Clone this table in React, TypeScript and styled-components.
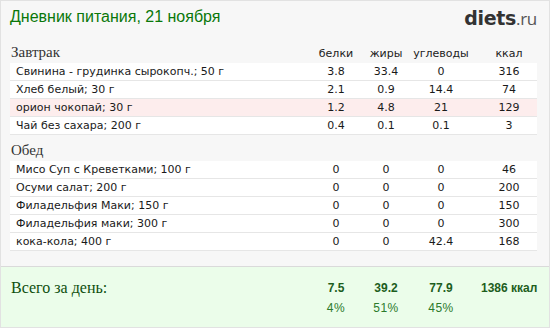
import styled, { createGlobalStyle } from "styled-components";

const GlobalStyle = createGlobalStyle`
  body {
    margin: 0;
    background: #ffffff;
  }
`;

const Page = styled.div`
  width: 550px;
  height: 328px;
  box-sizing: border-box;
  border: 1px solid #e2e2e2;
  background: #f7f7f7;
  display: flex;
  flex-direction: column;
  font-family: "DejaVu Sans", Verdana, sans-serif;
  color: #222;
`;

const Header = styled.div`
  display: flex;
  align-items: center;
  justify-content: space-between;
  height: 32px;
  padding: 0 12px 0 9px;
`;

const Title = styled.h1`
  margin: 0;
  font-family: "Liberation Sans", Arial, sans-serif;
  font-weight: normal;
  font-size: 16px;
  color: #0a780a;
`;

const Logo = styled.div`
  font-size: 19px;
  color: #333;
  letter-spacing: -0.3px;
  margin-top: 2px;
`;

const LogoStrong = styled.span`
  font-family: "DejaVu Sans", sans-serif;
  font-weight: bold;
`;

const LogoLight = styled.span`
  font-family: "Open Sans", sans-serif;
  font-size: 17px;
  color: #555;
`;

const Section = styled.div`
  padding: 0 12px 0 9px;
`;

const Cols = styled.div`
  display: grid;
  grid-template-columns: 1fr 50px 50px 60px 66px;
  align-items: center;
`;

const SectionHead = styled(Cols)<{ $first?: boolean }>`
  height: ${(p) => (p.$first ? 30 : 26)}px;
  align-items: end;
  padding-bottom: 2px;
  box-sizing: border-box;
`;

const SectionTitle = styled.div`
  font-family: "Liberation Serif", "Times New Roman", serif;
  font-size: 15px;
  color: #333;
  padding-left: 1px;
`;

const ColHead = styled.div<{ $last?: boolean }>`
  font-size: 11px;
  text-align: center;
  padding-left: ${(p) => (p.$last ? 10 : 0)}px;
  padding-bottom: 1px;
`;

const Row = styled(Cols)<{ $hl?: boolean }>`
  height: 17px;
  background: ${(p) => (p.$hl ? "#fdeded" : "#ffffff")};
  border-bottom: 1px solid #e6e6e6;
  font-size: 11px;
  color: #1a1a1a;
`;

const Name = styled.div`
  padding-left: 6px;
  white-space: nowrap;
`;

const Num = styled.div<{ $last?: boolean }>`
  text-align: center;
  padding-left: ${(p) => (p.$last ? 10 : 0)}px;
`;

const Totals = styled.div`
  margin-top: auto;
  height: 61px;
  border-top: 1px solid #dadada;
  background: #ebfdea;
  padding: 10px 12px 0 9px;
  box-sizing: border-box;
`;

const TotalsGrid = styled.div`
  display: grid;
  grid-template-columns: 1fr 50px 50px 60px 66px;
  grid-template-rows: 22px 18px;
  align-items: center;
`;

const TotalLabel = styled.div`
  font-family: "Liberation Serif", "Times New Roman", serif;
  font-size: 16px;
  color: #0e4f0e;
  padding-left: 1px;
`;

const TotalValue = styled.div<{ $last?: boolean }>`
  font-family: "Liberation Sans", Arial, sans-serif;
  font-weight: bold;
  font-size: 12px;
  color: #1d5e1d;
  text-align: center;
  white-space: nowrap;
  padding-left: ${(p) => (p.$last ? 10 : 0)}px;
`;

const Percent = styled.div`
  font-family: "Liberation Sans", Arial, sans-serif;
  font-size: 12px;
  color: #2c7a2c;
  text-align: center;
  letter-spacing: 0.5px;
`;

type Item = { name: string; p: string; f: string; c: string; k: string; hl?: boolean };

const breakfast: Item[] = [
  { name: "Свинина - грудинка сырокопч.; 50 г", p: "3.8", f: "33.4", c: "0", k: "316" },
  { name: "Хлеб белый; 30 г", p: "2.1", f: "0.9", c: "14.4", k: "74" },
  { name: "орион чокопай; 30 г", p: "1.2", f: "4.8", c: "21", k: "129", hl: true },
  { name: "Чай без сахара; 200 г", p: "0.4", f: "0.1", c: "0.1", k: "3" },
];

const lunch: Item[] = [
  { name: "Мисо Суп с Креветками; 100 г", p: "0", f: "0", c: "0", k: "46" },
  { name: "Осуми салат; 200 г", p: "0", f: "0", c: "0", k: "200" },
  { name: "Филадельфия Маки; 150 г", p: "0", f: "0", c: "0", k: "150" },
  { name: "Филадельфия маки; 300 г", p: "0", f: "0", c: "0", k: "300" },
  { name: "кока-кола; 400 г", p: "0", f: "0", c: "42.4", k: "168" },
];

function Meal({ title, items, first }: { title: string; items: Item[]; first?: boolean }) {
  return (
    <Section>
      <SectionHead $first={first}>
        <SectionTitle>{title}</SectionTitle>
        {first && (
          <>
            <ColHead>белки</ColHead>
            <ColHead>жиры</ColHead>
            <ColHead>углеводы</ColHead>
            <ColHead $last>ккал</ColHead>
          </>
        )}
      </SectionHead>
      {items.map((it, i) => (
        <Row key={i} $hl={it.hl}>
          <Name>{it.name}</Name>
          <Num>{it.p}</Num>
          <Num>{it.f}</Num>
          <Num>{it.c}</Num>
          <Num $last>{it.k}</Num>
        </Row>
      ))}
    </Section>
  );
}

export default function App() {
  return (
    <>
      <GlobalStyle />
      <Page>
        <Header>
          <Title>Дневник питания, 21 ноября</Title>
          <Logo>
            <LogoStrong>diets</LogoStrong>
            <LogoLight>.ru</LogoLight>
          </Logo>
        </Header>
        <Meal title="Завтрак" items={breakfast} first />
        <Meal title="Обед" items={lunch} />
        <Totals>
          <TotalsGrid>
            <TotalLabel>Всего за день:</TotalLabel>
            <TotalValue>7.5</TotalValue>
            <TotalValue>39.2</TotalValue>
            <TotalValue>77.9</TotalValue>
            <TotalValue $last>1386 ккал</TotalValue>
            <div />
            <Percent>4%</Percent>
            <Percent>51%</Percent>
            <Percent>45%</Percent>
            <div />
          </TotalsGrid>
        </Totals>
      </Page>
    </>
  );
}
